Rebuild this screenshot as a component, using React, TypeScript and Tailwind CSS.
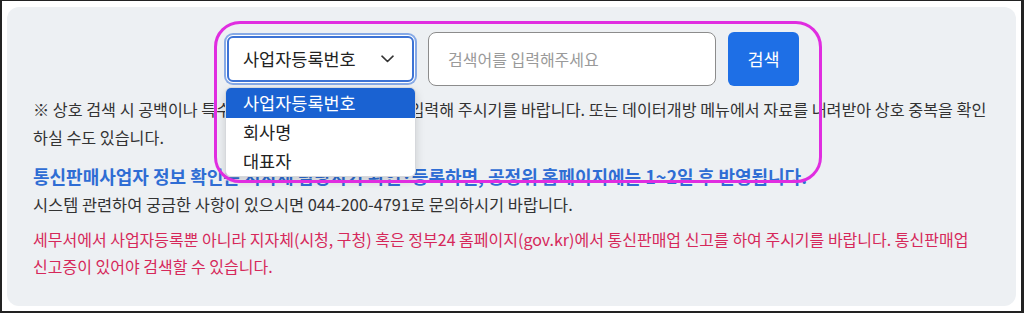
import React from "react";

export default function App() {
  const font = { fontFamily: '"Noto Sans CJK KR", "Noto Sans", sans-serif' };
  return (
    <div
      className="w-[1024px] h-[313px] bg-white border-[#222] border-l-2 border-t border-r-[3px] border-b-2 overflow-hidden"
      style={font}
    >
      <div className="relative ml-[5px] mt-[6px] w-[1009px] h-[299px] rounded-[12px] bg-[#edf0f3] px-[26px] pt-[25px]">
        {/* search row */}
        <div className="flex items-center justify-center pl-[3px]">
          <div className="relative">
            <div className="flex h-[46px] w-[187px] items-center justify-between rounded-[6px] border-2 border-[#3d73d5] bg-white pl-[14px] pr-[18px] ring-2 ring-[#86a9e6] ring-offset-1 ring-offset-white">
              <span className="text-[17.5px] text-[#222]">사업자등록번호</span>
              <svg width="13" height="8" viewBox="0 0 13 8" fill="none">
                <path d="M1 1.2L6.5 6.5L12 1.2" stroke="#333" strokeWidth="1.6" strokeLinecap="round" strokeLinejoin="round" />
              </svg>
            </div>
            <div className="absolute left-[-2px] top-[51px] z-10 w-[191px] overflow-hidden rounded-[6px] border border-[#d6d8dc] bg-white shadow-[0_4px_10px_rgba(0,0,0,0.15)]">
              <div className="flex h-[30px] items-center bg-[#1a62d2] pl-[17px] text-[17.5px] text-white">사업자등록번호</div>
              <div className="flex h-[29px] items-center pl-[17px] text-[17.5px] text-[#222]">회사명</div>
              <div className="flex h-[29px] items-center pl-[17px] text-[17.5px] text-[#222]">대표자</div>
            </div>
          </div>
          <div className="ml-[14px] flex h-[54px] w-[288px] items-center rounded-[8px] border border-[#8c8c8c] bg-white pl-[19px] text-[16px] text-[#9a9a9a]">
            검색어를 입력해주세요
          </div>
          <button className="ml-3 h-[54px] w-[71px] rounded-[6px] bg-[#1e6fe6] text-[17.5px] text-white">
            검색
          </button>
        </div>

        {/* notes */}
        <div className="mt-[9px] text-[16.2px] leading-[28px] text-[#333]">
          ※ 상호 검색 시 공백이나 특수문자 없이 정확한 상호명을 입력해 주시기를 바랍니다. 또는 데이터개방 메뉴에서 자료를 내려받아 상호 중복을 확인
          <br />
          하실 수도 있습니다.
        </div>
        <div className="mt-[11px] text-[18px] font-bold leading-[28px] text-[#2f6dd4]">
          통신판매사업자 정보 확인은 지자체 담당자가 확인·등록하면, 공정위 홈페이지에는 1~2일 후 반영됩니다.
        </div>
        <div className="text-[16.4px] leading-[28px] text-[#333]">
          시스템 관련하여 궁금한 사항이 있으시면 044-200-4791로 문의하시기 바랍니다.
        </div>
        <div className="mt-[8px] text-[16px] leading-[27px] text-[#d6285a]">
          세무서에서 사업자등록뿐 아니라 지자체(시청, 구청) 혹은 정부24 홈페이지(gov.kr)에서 통신판매업 신고를 하여 주시기를 바랍니다. 통신판매업
          <br />
          신고증이 있어야 검색할 수 있습니다.
        </div>

        {/* annotation */}
        <div className="pointer-events-none absolute left-[207px] top-[14px] z-20 h-[162px] w-[608px] rounded-[26px] border-[3px] border-[#e02de0]" />
      </div>
    </div>
  );
}
